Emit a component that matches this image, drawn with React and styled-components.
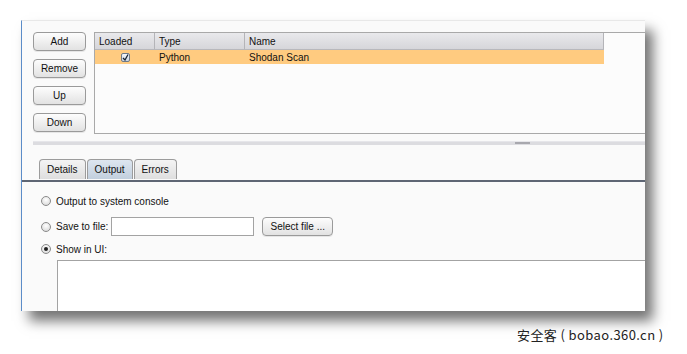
import React from "react";
import styled, { createGlobalStyle } from "styled-components";

const Global = createGlobalStyle`
  html, body { margin: 0; padding: 0; background: #fff; }
  body { font-family: "Liberation Sans", Arial, sans-serif; }
`;

const Page = styled.div`
  width: 687px;
  height: 354px;
  position: relative;
  overflow: hidden;
  background: #fff;
  padding: 20px 0 0 21px;
  box-sizing: border-box;
`;

const Window = styled.div`
  width: 624px;
  height: 291px;
  background: #fafafa;
  border-left: 1px solid #5b8cc8;
  border-top: 1px solid #e8e8e8;
  box-sizing: border-box;
  box-shadow: 8px 10px 12px rgba(0, 0, 0, 0.55);
  display: flex;
  flex-direction: column;
  overflow: hidden;
  font-size: 10px;
  color: #111;
`;

const Top = styled.div`
  display: flex;
  gap: 8px;
  padding: 11px 0 0 11px;
  height: 102px;
`;

const ButtonCol = styled.div`
  display: flex;
  flex-direction: column;
  gap: 8px;
`;

const Btn = styled.button`
  width: ${(p) => p.$w || 53}px;
  height: 19px;
  border: 1px solid #9a9a9a;
  border-radius: 4px;
  background: linear-gradient(#fdfdfd, #e2e2e2);
  box-shadow: 0 1px 0 rgba(0, 0, 0, 0.08);
  font-family: "Liberation Sans", Arial, sans-serif;
  font-size: 10px;
  color: #111;
  padding: 0;
  margin-left: ${(p) => p.$ml || 0}px;
  cursor: default;
`;

const Table = styled.div`
  flex: 1;
  border: 1px solid #a9a9a9;
  border-right: none;
  background: #fcfcfc;
  display: flex;
  flex-direction: column;
`;

const HeadRow = styled.div`
  display: grid;
  grid-template-columns: 60px 90px 359px;
  width: 509px;
  height: 17px;
`;

const HeadCell = styled.div`
  background: linear-gradient(#e9e9ec, #d6d6da);
  border-right: 1px solid #b4b4b8;
  border-bottom: 1px solid #b8b8bc;
  padding-left: 4px;
  display: flex;
  align-items: center;
  font-size: 10px;
  color: #111;
`;

const DataRow = styled.div`
  display: grid;
  grid-template-columns: 60px 90px 359px;
  width: 509px;
  height: 14px;
  background: #ffcb80;
`;

const Cell = styled.div`
  display: flex;
  align-items: center;
  justify-content: ${(p) => (p.$center ? "center" : "flex-start")};
  padding-left: ${(p) => (p.$center ? 0 : 4)}px;
  padding-top: 1px;
  font-size: 10px;
  color: #111;
`;

const Check = styled.span`
  width: 9px;
  height: 9px;
  border: 1px solid #6d7a8a;
  border-radius: 2px;
  background: linear-gradient(#f4f7fb, #c9d3df);
  display: flex;
  align-items: center;
  justify-content: center;
  box-sizing: border-box;
`;

const Splitter = styled.div`
  height: 17px;
  display: flex;
  flex-direction: column;
  justify-content: center;
`;

const SplitLine = styled.div`
  height: 3px;
  margin-left: 11px;
  background: #dcdce0;
  border-top: 1px solid #e6e6ea;
  position: relative;
`;

const Grip = styled.div`
  position: absolute;
  left: 482px;
  top: 0;
  width: 15px;
  height: 2px;
  background: #a8a8ae;
`;

const TabBar = styled.div`
  display: flex;
  padding: 8px 0 0 17px;
  border-bottom: 2px solid #5e6674;
  height: 21px;
  gap: 1px;
`;

const Tab = styled.div`
  height: 19px;
  padding: 0 7px;
  border: 1px solid #9c9c9c;
  border-bottom: none;
  border-radius: 4px 4px 0 0;
  background: ${(p) =>
    p.$active ? "linear-gradient(#dde6f0, #c2cfdd)" : "linear-gradient(#f4f4f4, #dedede)"};
  display: flex;
  align-items: center;
  font-size: 10px;
  color: #111;
`;

const Panel = styled.div`
  display: flex;
  flex-direction: column;
  padding: 12px 0 0 19px;
  flex: 1;
`;

const RadioRow = styled.div`
  display: flex;
  align-items: center;
  gap: 5px;
  height: ${(p) => p.$h || 14}px;
  margin-bottom: ${(p) => p.$mb || 0}px;
`;

const Radio = styled.span`
  width: 10px;
  height: 10px;
  border-radius: 50%;
  border: 1px solid #8a8a8a;
  background: radial-gradient(circle at 50% 35%, #ffffff, #d3d3d3);
  box-sizing: border-box;
  display: flex;
  align-items: center;
  justify-content: center;
  &::after {
    content: "";
    display: ${(p) => (p.$on ? "block" : "none")};
    width: 4px;
    height: 4px;
    border-radius: 50%;
    background: #222;
  }
`;

const Label = styled.span`
  font-size: 10px;
  color: #111;
`;

const Input = styled.div`
  width: 143px;
  height: 19px;
  box-sizing: border-box;
  border: 1px solid #a3a3a3;
  background: #fff;
  margin-left: -2px;
`;

const Text = styled.div`
  margin: 4px 0 0 16px;
  flex: 1;
  border: 1px solid #a3a3a3;
  border-right: none;
  border-bottom: none;
  background: #fff;
`;

const Watermark = styled.div`
  position: absolute;
  left: 517px;
  top: 325px;
  font-family: "Noto Sans CJK SC", "Liberation Sans", sans-serif;
  font-size: 13px;
  color: #222;
  letter-spacing: 0.4px;
  white-space: pre;
`;

export default function App() {
  return (
    <>
      <Global />
      <Page>
        <Window>
          <Top>
            <ButtonCol>
              <Btn>Add</Btn>
              <Btn>Remove</Btn>
              <Btn>Up</Btn>
              <Btn>Down</Btn>
            </ButtonCol>
            <Table>
              <HeadRow>
                <HeadCell>Loaded</HeadCell>
                <HeadCell>Type</HeadCell>
                <HeadCell>Name</HeadCell>
              </HeadRow>
              <DataRow>
                <Cell $center>
                  <Check>
                    <svg width="7" height="7" viewBox="0 0 7 7">
                      <path d="M1 4 L3 6 L6 0.5" stroke="#1b2533" strokeWidth="1.3" fill="none" />
                    </svg>
                  </Check>
                </Cell>
                <Cell>Python</Cell>
                <Cell>Shodan Scan</Cell>
              </DataRow>
            </Table>
          </Top>
          <Splitter>
            <SplitLine>
              <Grip />
            </SplitLine>
          </Splitter>
          <TabBar>
            <Tab>Details</Tab>
            <Tab $active>Output</Tab>
            <Tab>Errors</Tab>
          </TabBar>
          <Panel>
            <RadioRow $mb={9}>
              <Radio />
              <Label>Output to system console</Label>
            </RadioRow>
            <RadioRow $h={19} $mb={6}>
              <Radio />
              <Label>Save to file:</Label>
              <Input />
              <Btn $w={71} $ml={3}>Select file ...</Btn>
            </RadioRow>
            <RadioRow>
              <Radio $on />
              <Label>Show in UI:</Label>
            </RadioRow>
            <Text />
          </Panel>
        </Window>
        <Watermark>安全客 ( bobao.360.cn )</Watermark>
      </Page>
    </>
  );
}
